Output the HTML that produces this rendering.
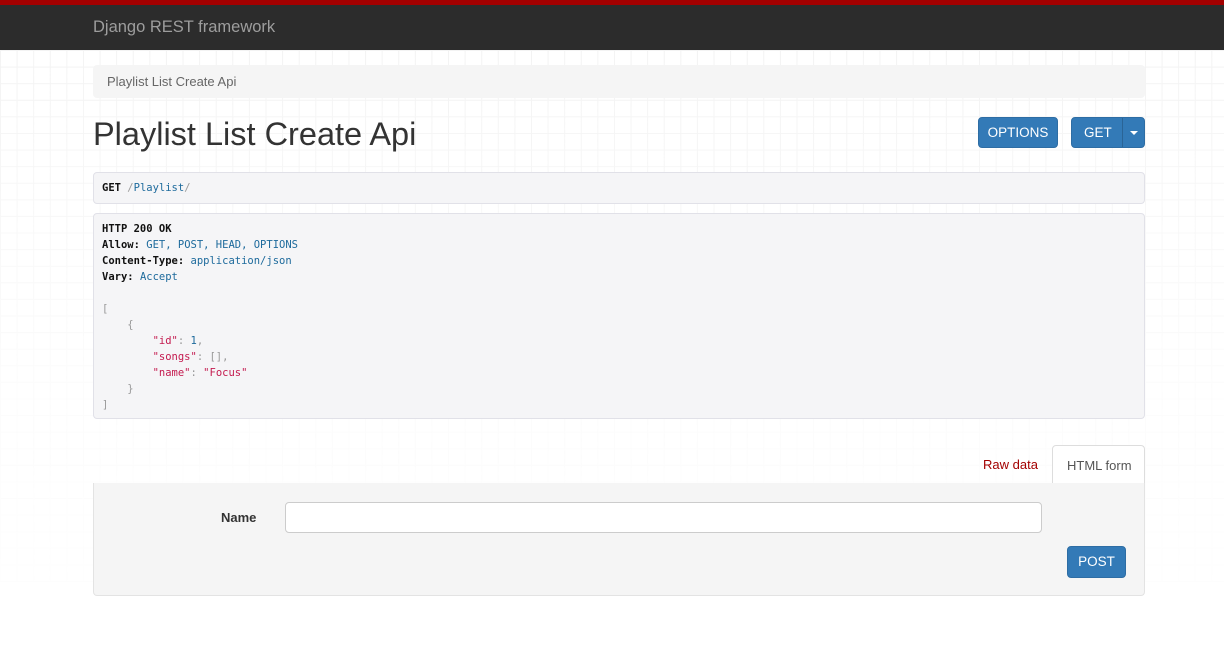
<!DOCTYPE html>
<html><head><style>
*{box-sizing:border-box;margin:0;padding:0}
body{width:1224px;height:669px;overflow:hidden;background:#fff;font-family:"Liberation Sans",sans-serif;position:relative}
.grid{position:absolute;left:0;top:50px;width:1224px;height:532px;background-image:linear-gradient(#f3f3f3 1px,transparent 1px),linear-gradient(90deg,#f3f3f3 1px,transparent 1px);background-size:16.6px 16.6px;-webkit-mask-image:linear-gradient(#000,rgba(0,0,0,.3) 60%,rgba(0,0,0,0.1));border-bottom:1px solid #eee}
.top{position:absolute;left:0;top:0;width:1224px;height:5px;background:#a30000}
.nav{position:absolute;left:0;top:5px;width:1224px;height:45px;background:#2c2c2c;color:#9d9d9d;font-size:16.5px;padding:13px 0 0 93px}
.abs{position:absolute}
.bc{left:93px;top:65px;width:1052px;height:33px;background:#f5f5f5;border-radius:4px;font-size:13px;color:#666;padding:9px 14px}
h1{position:absolute;left:93px;top:116px;font-size:32.5px;font-weight:normal;color:#333}
.btn{position:absolute;background:#337ab7;border:1px solid #2e6da4;color:#fff;font-size:13.5px;border-radius:4px;text-align:center}
pre{position:absolute;left:93px;width:1052px;background:#f5f5f7;border:1px solid #e1e1e8;border-radius:4px;font-family:"DejaVu Sans Mono",monospace;font-size:10.5px;line-height:16px;color:#333;padding:7px 8px;white-space:pre}
b{color:#111}
.k{color:#c41a4f}.v{color:#1d6a9c}.p{color:#999}
.form{left:93px;top:483px;width:1052px;height:113px;background:#f5f5f5;border:1px solid #e3e3e3;border-top:none;border-radius:0 0 4px 4px}
</style></head><body>
<div class="grid"></div>
<div class="top"></div>
<div class="nav">Django REST framework</div>
<div class="abs bc">Playlist List Create Api</div>
<h1>Playlist List Create Api</h1>
<div class="btn" style="left:978px;top:117px;width:80px;height:31px;line-height:29px">OPTIONS</div>
<div class="btn" style="left:1071px;top:117px;width:74px;height:31px;line-height:29px;text-align:left;padding-left:12px">GET<span style="position:absolute;left:50px;top:0;width:1px;height:29px;background:#2a6496"></span><span style="position:absolute;left:58px;top:13px;border-left:4px solid transparent;border-right:4px solid transparent;border-top:4px solid #fff"></span></div>
<pre style="top:172px;height:32px"><b>GET</b> <span class="p">/</span><span class="v">Playlist</span><span class="p">/</span></pre>
<pre style="top:213px;height:206px"><b>HTTP 200 OK</b>
<b>Allow:</b> <span class="v">GET, POST, HEAD, OPTIONS</span>
<b>Content-Type:</b> <span class="v">application/json</span>
<b>Vary:</b> <span class="v">Accept</span>

<span class="p">[</span>
    <span class="p">{</span>
        <span class="k">"id"</span><span class="p">:</span> <span class="v">1</span><span class="p">,</span>
        <span class="k">"songs"</span><span class="p">: [],</span>
        <span class="k">"name"</span><span class="p">:</span> <span class="k">"Focus"</span>
    <span class="p">}</span>
<span class="p">]</span></pre>
<div class="abs" style="left:983px;top:457px;font-size:13px;color:#a30000">Raw data</div>
<div class="abs" style="left:1052px;top:445px;width:93px;height:39px;background:#fff;border:1px solid #ddd;border-bottom:none;border-radius:4px 4px 0 0;font-size:13px;color:#555;padding:12px 0 0 14px">HTML form</div>
<div class="abs form"></div>
<div class="abs" style="left:221px;top:510px;font-size:13px;font-weight:bold;color:#333">Name</div>
<div class="abs" style="left:285px;top:502px;width:757px;height:31px;background:#fff;border:1px solid #ccc;border-radius:4px"></div>
<div class="btn" style="left:1067px;top:546px;width:59px;height:32px;line-height:30px">POST</div>
</body></html>
